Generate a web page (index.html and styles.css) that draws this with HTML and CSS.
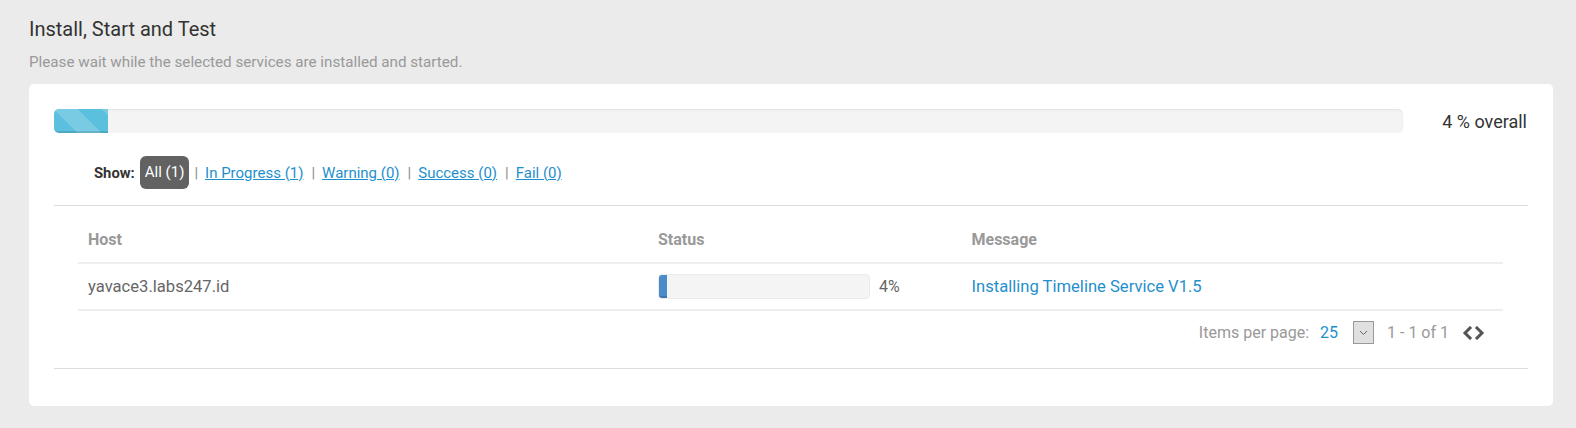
FILE: index.html
```html
<!DOCTYPE html>
<html>
<head>
<meta charset="utf-8">
<link rel="stylesheet" href="styles.css">
</head>
<body>
<div class="page">
  <h1 class="title">Install, Start and Test</h1>
  <p class="subtitle">Please wait while the selected services are installed and started.</p>
  <div class="card">
    <div class="overall">
      <div class="progress">
        <div class="progress-fill striped" style="width:4%"></div>
      </div>
      <div class="overall-text">4 % overall</div>
    </div>
    <div class="filters">
      <span class="show-label">Show:</span>
      <span class="pill">All (1)</span>
      <span class="sep">|</span>
      <a class="filter-link" href="#">In Progress (1)</a>
      <span class="sep">|</span>
      <a class="filter-link" href="#">Warning (0)</a>
      <span class="sep">|</span>
      <a class="filter-link" href="#">Success (0)</a>
      <span class="sep">|</span>
      <a class="filter-link" href="#">Fail (0)</a>
    </div>
    <div class="grid-wrap">
      <table class="hosts">
        <colgroup>
          <col class="col-host">
          <col class="col-status">
          <col class="col-msg">
        </colgroup>
        <thead>
          <tr><th>Host</th><th>Status</th><th>Message</th></tr>
        </thead>
        <tbody>
          <tr>
            <td class="host">yavace3.labs247.id</td>
            <td>
              <div class="status">
                <div class="mini-progress"><div class="mini-fill" style="width:4%"></div></div>
                <span class="pct">4%</span>
              </div>
            </td>
            <td><a class="msg" href="#">Installing Timeline Service V1.5</a></td>
          </tr>
        </tbody>
      </table>
      <div class="pager">
        <span class="pager-label">Items per page:</span>
        <span class="pager-size">25</span>
        <span class="pager-select">
          <svg width="9" height="6" viewBox="0 0 9 6"><path d="M1 1 L4.5 4.5 L8 1" fill="none" stroke="#666" stroke-width="1"/></svg>
        </span>
        <span class="pager-range">1 - 1 of 1</span>
        <span class="pager-arrows">
          <svg width="25" height="14" viewBox="0 0 25 14"><path d="M9 2 L4 7 L9 12" fill="none" stroke="#555" stroke-width="3" stroke-linecap="square"/><path d="M16 2 L21 7 L16 12" fill="none" stroke="#555" stroke-width="3" stroke-linecap="square"/></svg>
        </span>
      </div>
    </div>
  </div>
</div>
</body>
</html>
```
FILE: styles.css
```css
* { box-sizing: border-box; }
html, body { margin: 0; padding: 0; }
body {
  background: #ebebeb;
  font-family: Roboto, "Liberation Sans", sans-serif;
  color: #333;
  width: 1576px;
  height: 428px;
  overflow: hidden;
}
.page {
  padding: 17px 23px 0 29px;
}
.title {
  margin: 0;
  font-size: 20px;
  line-height: 24px;
  font-weight: 400;
  color: #333;
}
.subtitle {
  margin: 11px 0 0;
  font-size: 15.2px;
  line-height: 20px;
  color: #999;
}
.card {
  margin-top: 12px;
  background: #fff;
  border-radius: 5px;
  padding: 25px 25px 37px;
}
.overall {
  display: flex;
  align-items: center;
}
.progress {
  flex: 1;
  height: 24px;
  background: #f4f4f4;
  border-radius: 5px;
  box-shadow: inset 0 1px 2px rgba(0,0,0,.08);
  overflow: hidden;
}
.progress-fill {
  height: 100%;
  background-color: #5bc0de;
  box-shadow: inset 0 -2px 0 rgba(0,0,0,.12);
}
.striped {
  background-image: linear-gradient(45deg, rgba(255,255,255,.18) 25%, transparent 25%, transparent 50%, rgba(255,255,255,.18) 50%, rgba(255,255,255,.18) 75%, transparent 75%, transparent);
  background-size: 48px 48px;
}
.overall-text {
  width: 125px;
  text-align: right;
  font-size: 18px;
  color: #333;
  padding-right: 1px;
}
.filters {
  margin-top: 23px;
  padding-left: 40px;
  display: flex;
  align-items: center;
  height: 33px;
  font-size: 15px;
}
.show-label {
  font-weight: 700;
  font-size: 14.8px;
  color: #333;
  margin-right: 5px;
}
.pill {
  background: #626262;
  color: #fff;
  border-radius: 6px;
  height: 33px;
  line-height: 33px;
  padding: 0 5px;
}
.sep {
  color: #8a8a8a;
  padding: 0 7px 0 5px;
}
.filter-link {
  color: #1f8fcc;
  text-decoration: underline;
  padding-right: 3px;
}
.grid-wrap {
  margin-top: 16px;
  border-top: 1px solid #ddd;
  border-bottom: 1px solid #ddd;
  padding: 16px 25px 24px 24px;
}
.hosts {
  width: 100%;
  border-collapse: collapse;
  table-layout: fixed;
  font-size: 16px;
}
.col-host { width: 40%; }
.col-status { width: 22%; }
.col-msg { width: 38%; }
.hosts th {
  text-align: left;
  font-weight: 700;
  color: #999;
  padding: 8px 10px 12px;
  line-height: 20px;
  border-bottom: 2px solid #eee;
}
.hosts td {
  padding: 10px 10px;
  height: 47px;
  border-bottom: 2px solid #eee;
  color: #666;
  font-size: 16.6px;
  vertical-align: middle;
}
.status {
  display: flex;
  align-items: center;
}
.mini-progress {
  width: 212px;
  height: 25px;
  background: #f4f4f4;
  border: 1px solid #eaeaea;
  border-radius: 4px;
  overflow: hidden;
}
.mini-fill {
  height: 100%;
  background: #4a8bc9;
  box-shadow: inset 0 -2px 0 rgba(0,0,0,.15);
}
.pct {
  margin-left: 9px;
  color: #666;
  font-size: 16px;
}
.msg {
  color: #1f8fcc;
  text-decoration: none;
}
.pager {
  margin-top: 10px;
  display: flex;
  justify-content: flex-end;
  align-items: center;
  height: 23px;
  padding-right: 17px;
  font-size: 16px;
  color: #999;
}
.pager-size {
  color: #1f8fcc;
  margin-left: 11px;
}
.pager-select {
  margin-left: 15px;
  width: 21px;
  height: 23px;
  background: #e0e0e0;
  border: 1px solid #999;
  display: flex;
  align-items: center;
  justify-content: center;
}
.pager-range {
  margin-left: 13px;
}
.pager-arrows {
  margin-left: 12px;
  display: flex;
}
```
